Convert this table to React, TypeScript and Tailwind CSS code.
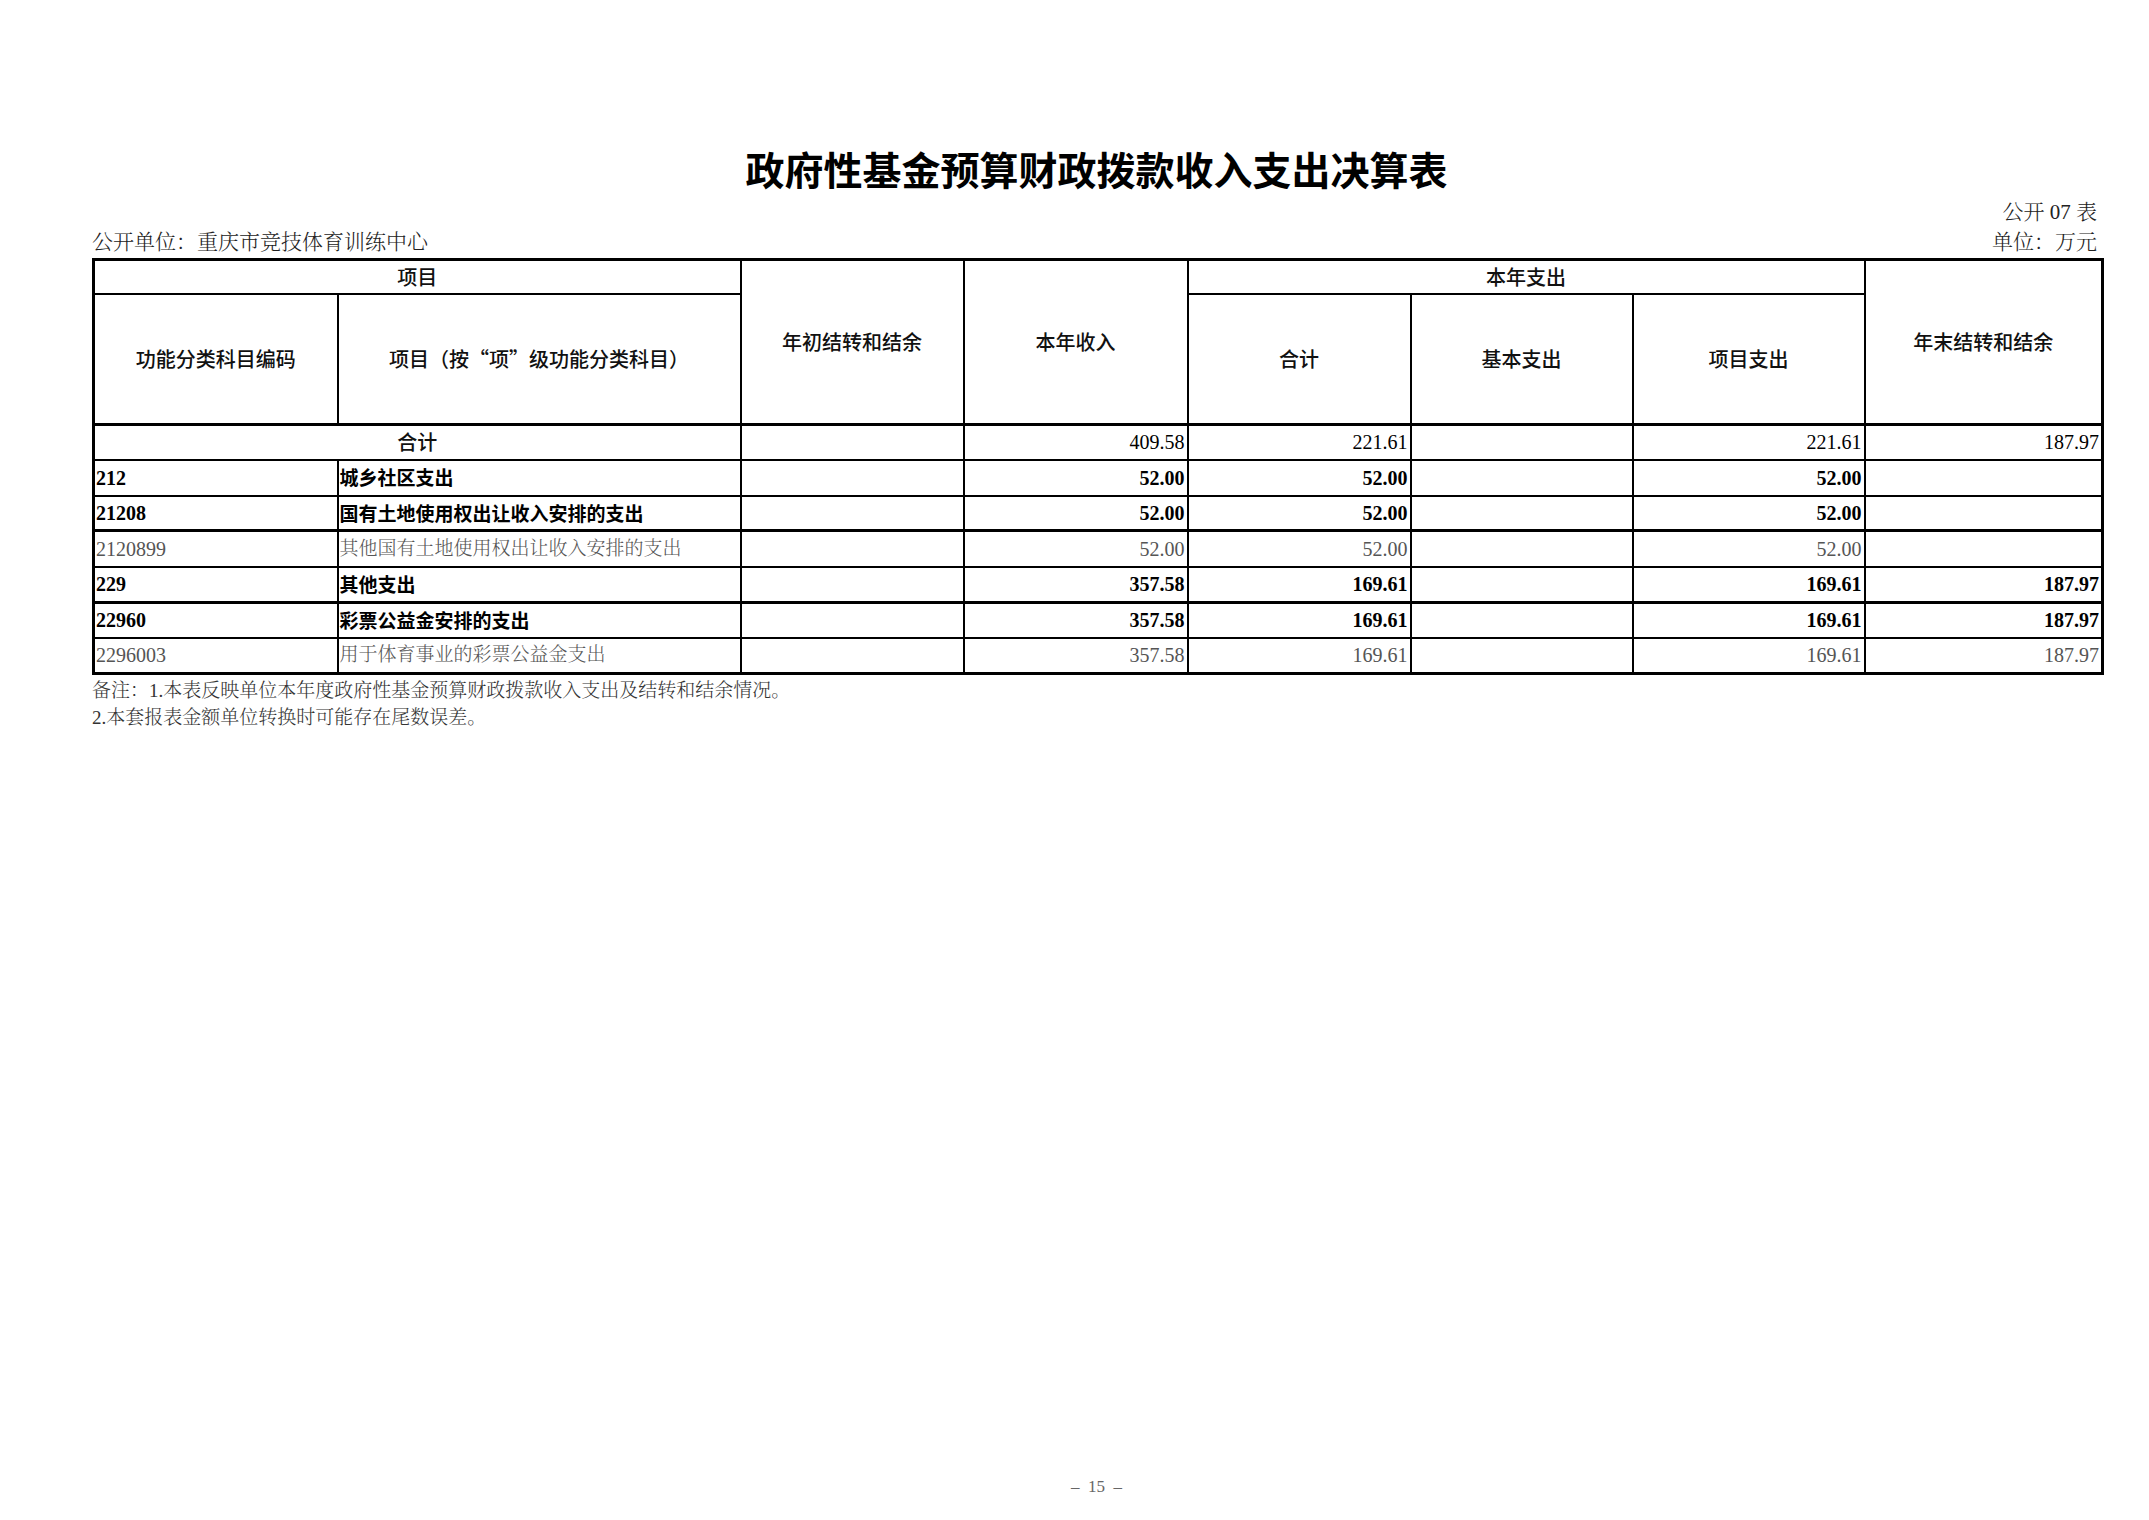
const hei = { fontFamily: '"Noto Sans CJK SC", "Liberation Sans", sans-serif' };
const song = { fontFamily: '"Liberation Serif", "Noto Serif CJK SC", "Noto Sans CJK SC", serif' };

type Row = {
  code: string;
  name: string;
  income: string;
  total: string;
  project: string;
  end: string;
  kind: "bold" | "light";
  thickBottom?: boolean;
  h: string;
};

const rows: Row[] = [
  { code: "212", name: "城乡社区支出", income: "52.00", total: "52.00", project: "52.00", end: "", kind: "bold", h: "h-[36px]" },
  { code: "21208", name: "国有土地使用权出让收入安排的支出", income: "52.00", total: "52.00", project: "52.00", end: "", kind: "bold", thickBottom: true, h: "h-[35px]" },
  { code: "2120899", name: "其他国有土地使用权出让收入安排的支出", income: "52.00", total: "52.00", project: "52.00", end: "", kind: "light", h: "h-[36px]" },
  { code: "229", name: "其他支出", income: "357.58", total: "169.61", project: "169.61", end: "187.97", kind: "bold", thickBottom: true, h: "h-[36px]" },
  { code: "22960", name: "彩票公益金安排的支出", income: "357.58", total: "169.61", project: "169.61", end: "187.97", kind: "bold", h: "h-[35px]" },
  { code: "2296003", name: "用于体育事业的彩票公益金支出", income: "357.58", total: "169.61", project: "169.61", end: "187.97", kind: "light", h: "h-[36px]" },
];

function DataRow({ r }: { r: Row }) {
  const b = r.thickBottom ? "border-b-[3px]" : "";
  const cell = `border-2 border-black p-0 ${b}`;
  const tone = r.kind === "bold" ? "font-bold text-black" : "font-normal text-[#555]";
  const num = `text-right pr-[2px] text-[20px] ${tone}`;
  const code = `text-left pl-[1px] text-[20px] ${tone}`;
  const txt =
    r.kind === "bold"
      ? "text-left pl-[1px] text-[19px] font-bold text-black"
      : "text-left pl-[1px] text-[19px] font-light text-[#555]";
  return (
    <tr className={r.h}>
      <td className={`${cell} ${code}`} style={song}>
        {r.code}
      </td>
      <td className={`${cell} ${txt}`} style={r.kind === "bold" ? hei : song}>
        {r.name}
      </td>
      <td className={cell}></td>
      <td className={`${cell} ${num}`} style={song}>{r.income}</td>
      <td className={`${cell} ${num}`} style={song}>{r.total}</td>
      <td className={cell}></td>
      <td className={`${cell} ${num}`} style={song}>{r.project}</td>
      <td className={`${cell} ${num}`} style={song}>{r.end}</td>
    </tr>
  );
}

export default function App() {
  const hd = "border-2 border-black p-0 text-center align-middle text-[20px] font-medium text-[#111]";
  const tot = "border-2 border-black p-0 pr-[2px] text-right text-[20px] text-black";
  return (
    <div className="min-h-screen bg-white text-black">
      <div className="ml-[92px] w-[2009px] pt-[146px]">
        <h1 className="h-[44px] text-center text-[39px] leading-[44px] font-bold" style={hei}>
          政府性基金预算财政拨款收入支出决算表
        </h1>
        <div className="mt-[7px] h-[30px] pr-[4px] text-right text-[21px] leading-[30px] font-light text-[#222]" style={song}>
          公开 07 表
        </div>
        <div className="flex h-[30px] justify-between pr-[4px] text-[21px] leading-[30px] font-light text-[#222]" style={song}>
          <span>公开单位：重庆市竞技体育训练中心</span>
          <span>单位：万元</span>
        </div>
        <table className="mt-[1px] w-[2009px] table-fixed border-collapse border-[3px] border-black" style={hei}>
          <colgroup>
            <col className="w-[244px]" />
            <col className="w-[403px]" />
            <col className="w-[223px]" />
            <col className="w-[224px]" />
            <col className="w-[223px]" />
            <col className="w-[222px]" />
            <col className="w-[232px]" />
            <col className="w-[238px]" />
          </colgroup>
          <thead>
            <tr className="h-[34px]">
              <th colSpan={2} className={hd}>项目</th>
              <th rowSpan={2} className={`${hd} border-b-[3px]`}>年初结转和结余</th>
              <th rowSpan={2} className={`${hd} border-b-[3px]`}>本年收入</th>
              <th colSpan={3} className={hd}>本年支出</th>
              <th rowSpan={2} className={`${hd} border-b-[3px]`}>年末结转和结余</th>
            </tr>
            <tr className="h-[131px]">
              <th className={`${hd} border-b-[3px]`}>功能分类科目编码</th>
              <th className={`${hd} border-b-[3px]`}>项目（按“项”级功能分类科目）</th>
              <th className={`${hd} border-b-[3px]`}>合计</th>
              <th className={`${hd} border-b-[3px]`}>基本支出</th>
              <th className={`${hd} border-b-[3px]`}>项目支出</th>
            </tr>
          </thead>
          <tbody>
            <tr className="h-[35px]">
              <td colSpan={2} className="border-2 border-black p-0 text-center text-[20px] font-medium text-[#111]">
                合计
              </td>
              <td className="border-2 border-black p-0"></td>
              <td className={tot} style={song}>409.58</td>
              <td className={tot} style={song}>221.61</td>
              <td className="border-2 border-black p-0"></td>
              <td className={tot} style={song}>221.61</td>
              <td className={tot} style={song}>187.97</td>
            </tr>
            {rows.map((r) => (
              <DataRow key={r.code} r={r} />
            ))}
          </tbody>
        </table>
        <div className="mt-[2px] text-[19px] leading-[27px] font-light text-[#333]" style={song}>
          <p>备注：1.本表反映单位本年度政府性基金预算财政拨款收入支出及结转和结余情况。</p>
          <p>2.本套报表金额单位转换时可能存在尾数误差。</p>
        </div>
        <div className="mt-[743px] text-center text-[17px] text-[#666]" style={song}>
          –&nbsp;&nbsp;15&nbsp;&nbsp;–
        </div>
      </div>
    </div>
  );
}
